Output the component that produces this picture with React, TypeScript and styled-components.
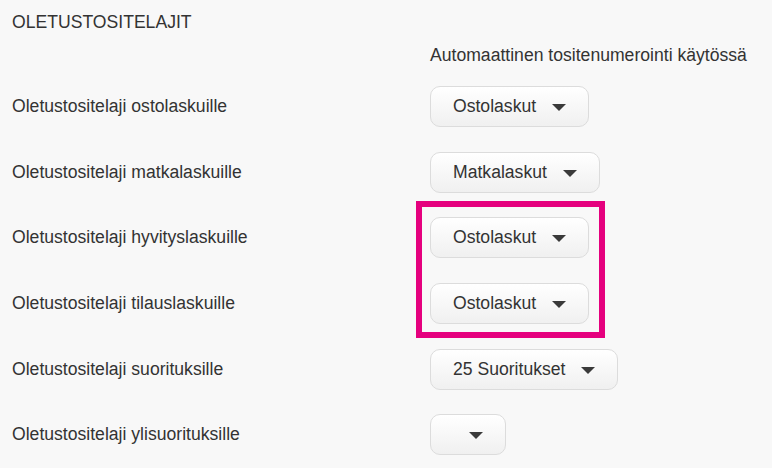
import * as React from 'react';
import styled, { createGlobalStyle } from 'styled-components';

const GlobalStyle = createGlobalStyle`
  html, body {
    margin: 0;
    padding: 0;
    background: #f8f8f8;
  }
  body {
    font-family: "Liberation Sans", Arial, sans-serif;
    font-size: 17.6px;
    color: #333;
  }
`;

const Page = styled.div`
  position: relative;
  width: 772px;
  height: 468px;
  overflow: hidden;
  padding-left: 12px;
  box-sizing: border-box;
`;

const Title = styled.div`
  font-size: 17.6px;
  line-height: 44px;
  height: 44px;
`;

const Form = styled.div`
  display: grid;
  grid-template-columns: 418px auto;
  grid-template-rows: 30px;
  grid-auto-rows: 65.6px;
  align-items: center;
`;

const HeaderCell = styled.div`
  grid-column: 2;
  align-self: start;
  font-size: 17.6px;
  line-height: 22px;
`;

const Label = styled.div`
  grid-column: 1;
  font-size: 17.6px;
`;

const SelectButton = styled.button`
  grid-column: 2;
  justify-self: start;
  display: flex;
  align-items: center;
  gap: 16px;
  height: 41px;
  padding: 0 22px;
  box-sizing: border-box;
  border: 1px solid #dcdcdc;
  border-radius: 10px;
  background: linear-gradient(#ffffff, #f0f0f0);
  font-family: inherit;
  font-size: 17.6px;
  color: #333;
  cursor: pointer;
`;

const Caret = styled.span`
  width: 0;
  height: 0;
  margin-top: 2px;
  border-left: 7px solid transparent;
  border-right: 7px solid transparent;
  border-top: 7px solid #3a3a3a;
`;

const Highlight = styled.div`
  position: absolute;
  left: 416px;
  top: 201px;
  width: 189px;
  height: 137px;
  box-sizing: border-box;
  border: 6px solid #e5007e;
  pointer-events: none;
`;

const rows = [
  { label: 'Oletustositelaji ostolaskuille', value: 'Ostolaskut' },
  { label: 'Oletustositelaji matkalaskuille', value: 'Matkalaskut' },
  { label: 'Oletustositelaji hyvityslaskuille', value: 'Ostolaskut' },
  { label: 'Oletustositelaji tilauslaskuille', value: 'Ostolaskut' },
  { label: 'Oletustositelaji suorituksille', value: '25 Suoritukset' },
  { label: 'Oletustositelaji ylisuorituksille', value: '' },
];

const App: React.FC = () => {
  return (
    <Page>
      <GlobalStyle />
      <Title>OLETUSTOSITELAJIT</Title>
      <Form>
        <HeaderCell>Automaattinen tositenumerointi käytössä</HeaderCell>
        {rows.map((row) => (
          <React.Fragment key={row.label}>
            <Label>{row.label}</Label>
            <SelectButton type="button">
              <span>{row.value}</span>
              <Caret />
            </SelectButton>
          </React.Fragment>
        ))}
      </Form>
      <Highlight />
    </Page>
  );
};

export default App;
